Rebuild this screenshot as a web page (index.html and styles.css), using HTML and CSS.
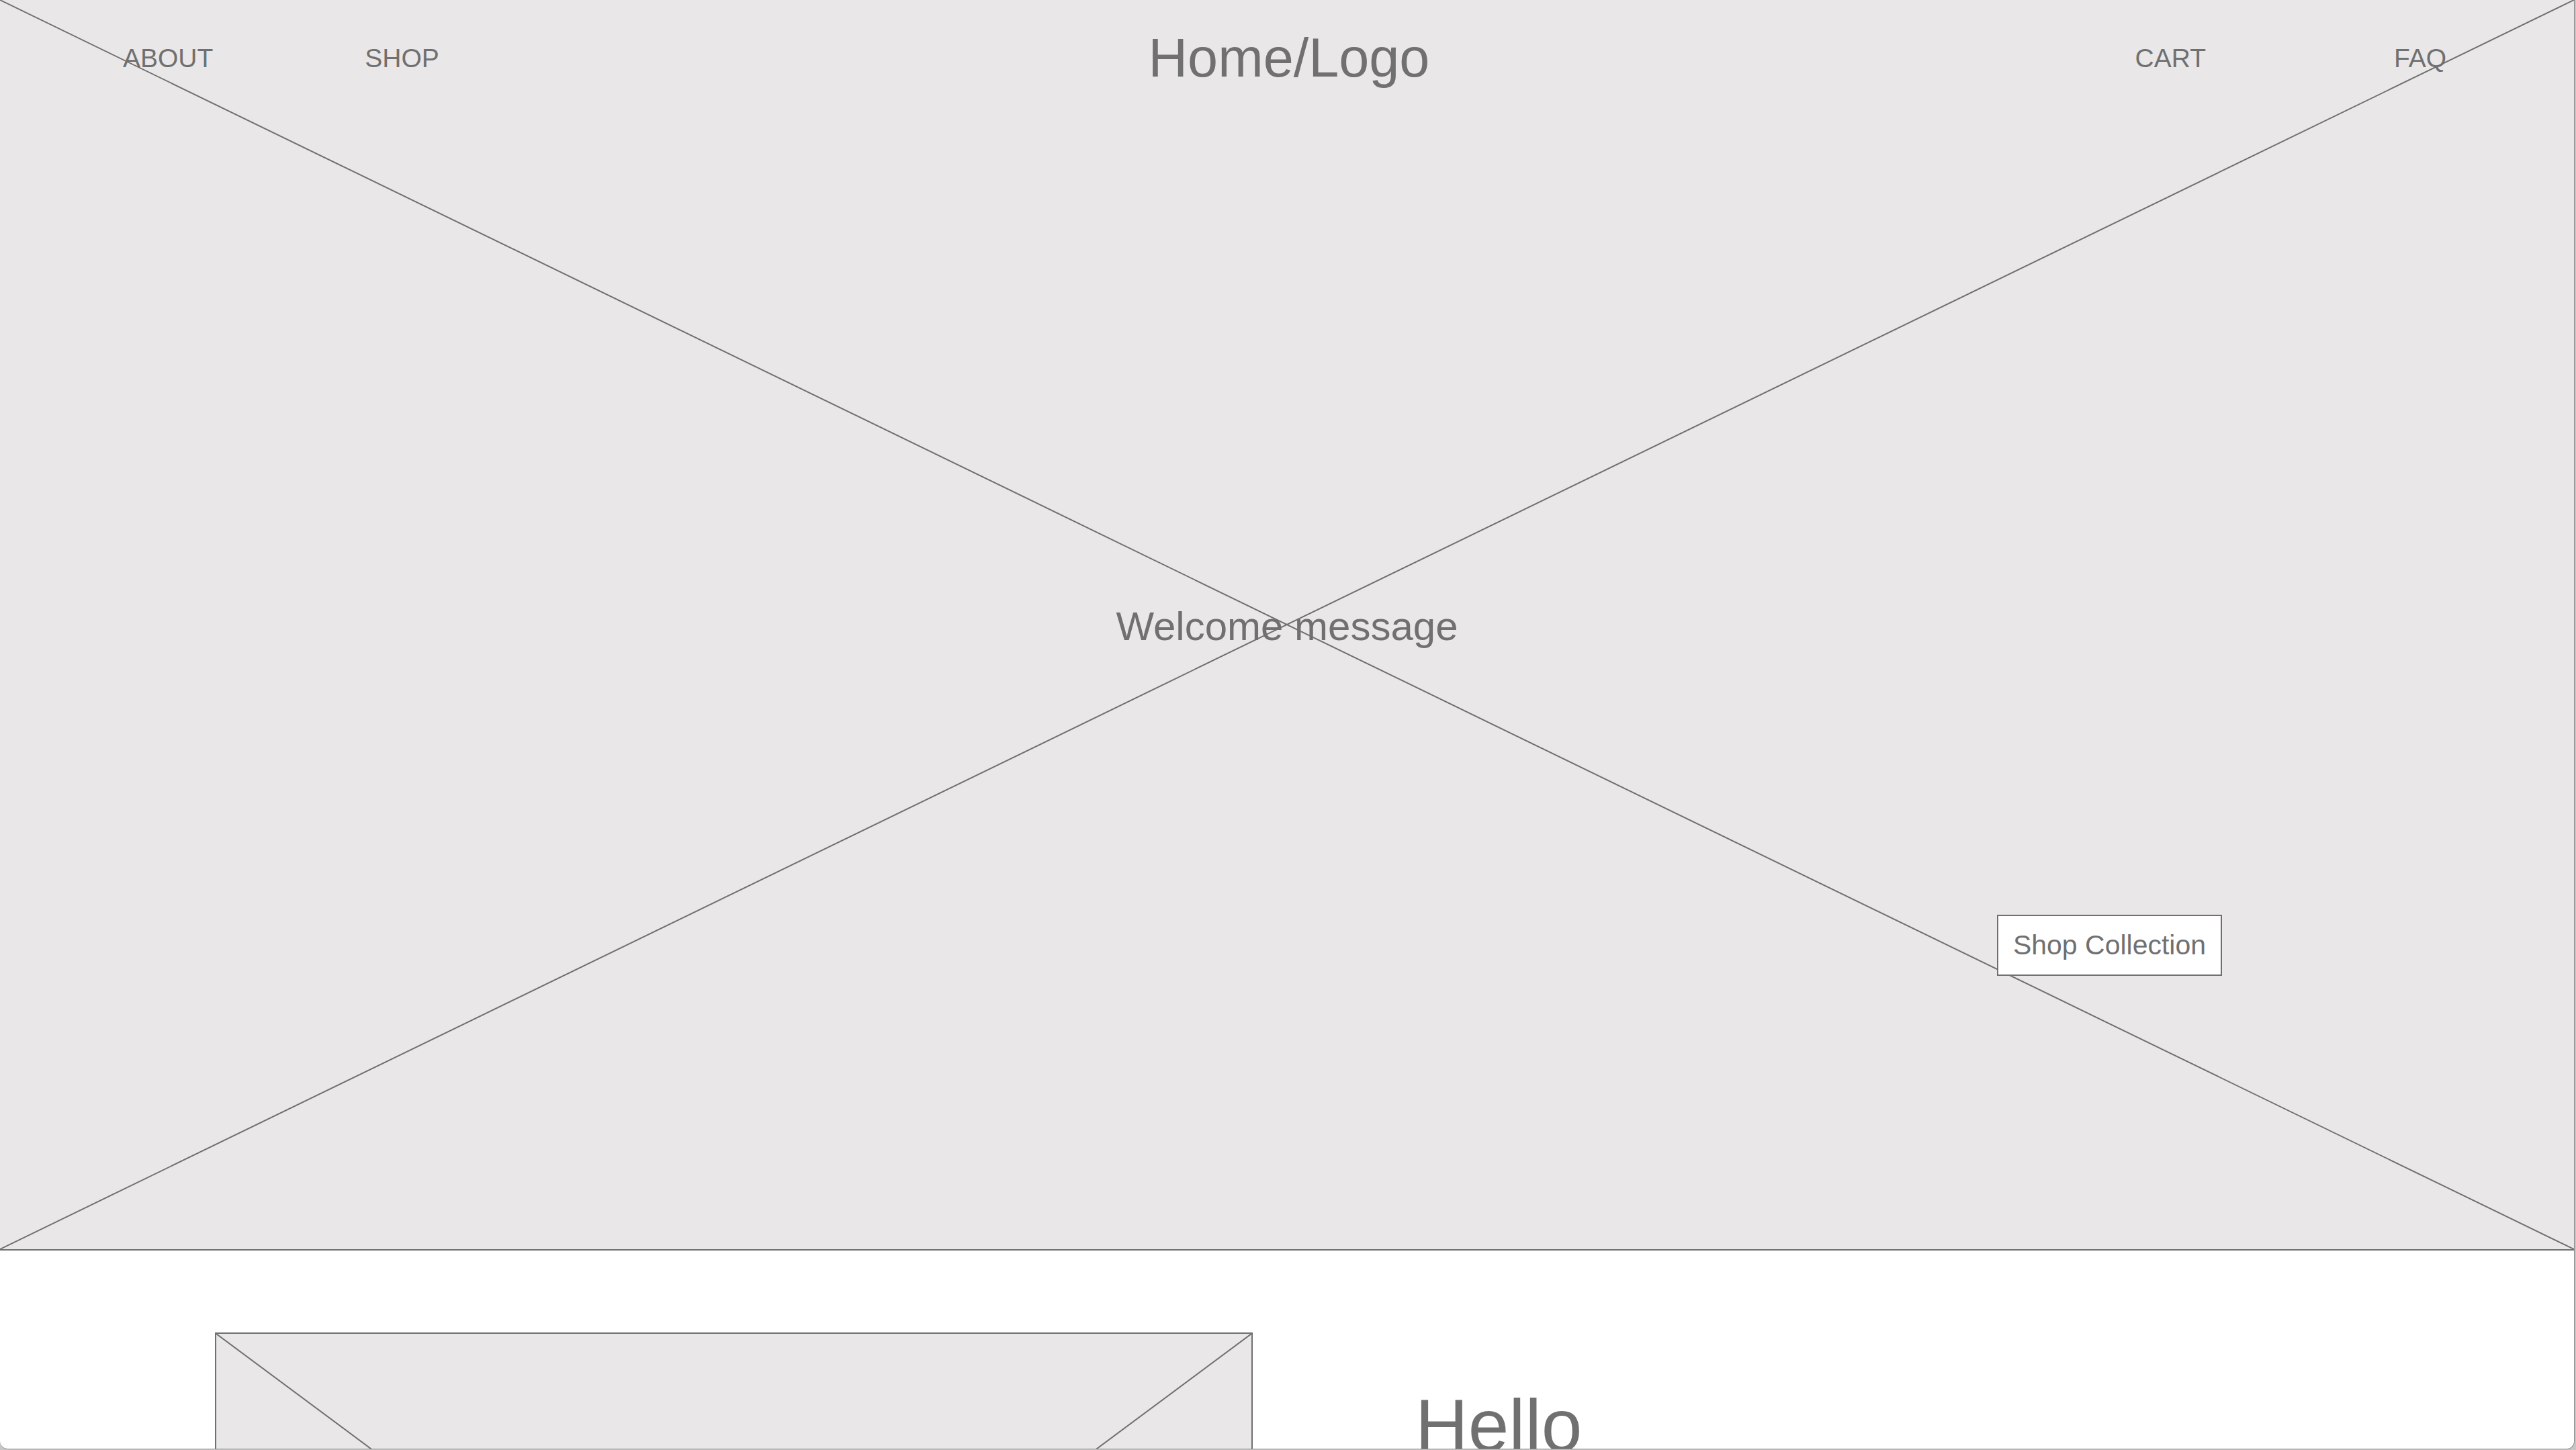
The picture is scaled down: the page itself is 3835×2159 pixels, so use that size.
FILE: index.html
```html
<!DOCTYPE html>
<html lang="en">
<head>
<meta charset="utf-8">
<title>Wireframe</title>
<link rel="stylesheet" href="styles.css">
</head>
<body>
<div class="frame">
  <section class="hero">
    <svg class="xmark" viewBox="0 0 100 100" preserveAspectRatio="none" aria-hidden="true">
      <line x1="0" y1="0" x2="100" y2="100" vector-effect="non-scaling-stroke"/>
      <line x1="100" y1="0" x2="0" y2="100" vector-effect="non-scaling-stroke"/>
    </svg>
    <header class="header">
      <nav class="nav nav-left">
        <a class="nav-link">ABOUT</a>
        <a class="nav-link">SHOP</a>
      </nav>
      <div class="logo">Home/Logo</div>
      <nav class="nav nav-right">
        <a class="nav-link">CART</a>
        <a class="nav-link">FAQ</a>
      </nav>
    </header>
    <h1 class="welcome">Welcome message</h1>
    <button class="cta">Shop Collection</button>
  </section>
  <section class="intro">
    <div class="placeholder">
      <svg class="xmark" viewBox="0 0 100 100" preserveAspectRatio="none" aria-hidden="true">
        <line x1="0" y1="0" x2="100" y2="100" vector-effect="non-scaling-stroke"/>
        <line x1="100" y1="0" x2="0" y2="100" vector-effect="non-scaling-stroke"/>
      </svg>
    </div>
    <h2 class="hello">Hello</h2>
  </section>
</div>
</body>
</html>
```
FILE: styles.css
```css
html, body {
  margin: 0;
  padding: 0;
}
body {
  background: #c6c6c6;
  width: 3835px;
  height: 2159px;
  overflow: hidden;
  font-family: "Liberation Sans", Arial, Helvetica, sans-serif;
  color: #707070;
}
.frame {
  width: 3832px;
  height: 2157px;
  background: #ffffff;
  border-right: 1px solid #8c8c8c;
  border-bottom: 1px solid #8c8c8c;
  border-radius: 0 0 12px 12px;
  overflow: hidden;
}
.hero {
  position: relative;
  height: 1860px;
  background: #e9e7e8;
  border-bottom: 2px solid #707070;
  display: flex;
  flex-direction: column;
}
.xmark {
  position: absolute;
  inset: 0;
  width: 100%;
  height: 100%;
}
.xmark line {
  stroke: #707070;
  stroke-width: 2;
}
.header {
  position: relative;
  display: grid;
  grid-template-columns: 1fr auto 1fr;
  align-items: start;
  padding-top: 46px;
}
.nav {
  display: flex;
  margin-top: 22px;
}
.nav-left {
  padding-left: 183px;
  gap: 226px;
}
.nav-right {
  justify-content: flex-end;
  padding-right: 190px;
  gap: 280px;
}
.nav-link {
  font-size: 39px;
  line-height: 38px;
  color: #707070;
}
.logo {
  font-size: 81px;
  line-height: 80px;
  margin-left: 6px;
}
.welcome {
  position: relative;
  margin: 777px 0 0;
  font-size: 60px;
  line-height: 60px;
  font-weight: normal;
  text-align: center;
}
.cta {
  position: relative;
  align-self: flex-end;
  margin: 399px 524px 0 0;
  width: 335px;
  height: 91px;
  box-sizing: border-box;
  background: #ffffff;
  border: 2px solid #707070;
  font-family: "Liberation Sans", Arial, Helvetica, sans-serif;
  font-size: 41px;
  color: #707070;
  padding: 0;
}
.intro {
  display: flex;
  align-items: flex-start;
  padding: 122px 0 0 320px;
  gap: 242px;
}
.placeholder {
  position: relative;
  flex: none;
  width: 1545px;
  height: 1150px;
  box-sizing: border-box;
  border: 2px solid #707070;
  background: #e9e7e8;
}
.hello {
  margin: 86px 0 0;
  font-size: 109px;
  line-height: 105px;
  font-weight: normal;
}
```
